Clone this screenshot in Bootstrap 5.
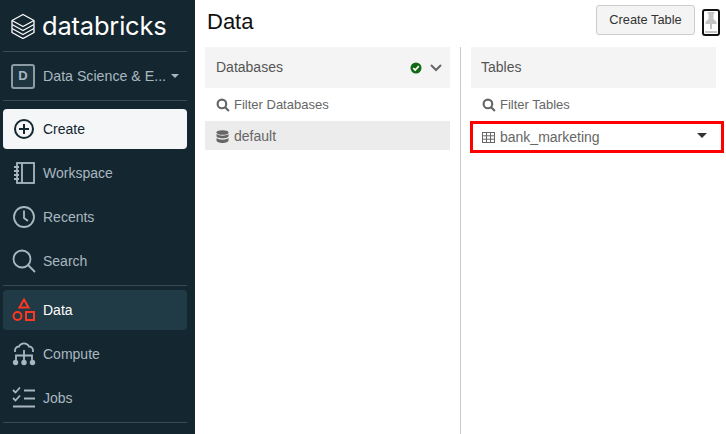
<!doctype html>
<html><head><meta charset="utf-8">
<link href="https://cdn.jsdelivr.net/npm/bootstrap@5.3.0/dist/css/bootstrap.min.css" rel="stylesheet">
<style>
html,body{height:434px;overflow:hidden}
body{font-family:"Liberation Sans",Arial,sans-serif;font-size:14px;color:#333;background:#fff}
.app-shell{height:434px}
.side{width:195px;background:#14262f;color:#a9b8c0;padding:0 8px 0 3px;flex:none}
.brand{height:51px;color:#fff;padding-left:8px;gap:7px}
.brand-name{font-family:Inter,sans-serif;font-size:25.5px;line-height:1;letter-spacing:-.2px;font-weight:400}
.rule{height:1px;background:#3a4a52;flex:none}
.rule-gap{margin-top:2px}
.ws{height:48px;padding-left:8px;gap:8px}
.ws-name{font-size:14.2px;padding-top:2px}
.ws-badge{width:24px;height:25px;border:2px solid #8b9ca5;border-radius:3px;font-weight:700;font-size:13px;color:#a9b8c0;background:#1f3640}
.caret-s{width:0;height:0;border-left:4px solid transparent;border-right:4px solid transparent;border-top:4px solid #a9b8c0;margin-left:-3px}
.nav-row{height:44px;padding-left:9px;gap:7px;color:#a9b8c0;white-space:nowrap}
.nav-row svg{flex:none}
.create-row{height:40px;background:#f4f6f7;color:#14262f;border-radius:4px;margin:8px 0 2px}
.active-row{height:40px;background:#203a46;color:#fff;border-radius:4px;margin:4px 0 2px}
.ico{width:24px;height:24px}
.main-area{min-width:0}
.page-head{height:47px;padding-left:12px;padding-right:6px}
.page-title{font-size:22px;font-weight:400;color:#111;margin:-4px 0 0;line-height:1}
.btn-create{height:30px;width:99px;padding:0;background:#f4f4f4;border:1px solid #ccc;border-radius:3px;font-size:12.8px;color:#333;margin-right:7px;margin-top:-7px}
.pin-btn{width:18px;height:27px;border:2px solid #111;border-radius:3px;padding:0;background:#fff;margin-top:-3px}
.pane{width:245px;flex:none}
.pane-l{margin-left:10px}
.pane-sep{width:1px;background:#ccc;margin:0 10px;flex:none}
.pane-head{height:41px;background:#f4f4f4;padding:0 8px 0 11px;color:#555;font-size:14px}
.pane-head-t{padding-left:10px}
.filter{height:33px;padding-left:11px;gap:4px;color:#666;font-size:13px}
.item{height:29px;background:#ececec;padding:2px 0 0 11px;gap:5px;color:#666;font-size:14px}
.item-t{height:32px;width:254px;margin-left:-1px;border:3px solid #f00;padding:0 14px 0 9px;gap:5px;color:#666;font-size:14px;background:#fff}
.caret-d{width:0;height:0;border-left:5px solid transparent;border-right:5px solid transparent;border-top:5px solid #333;margin-top:-4px}
</style></head>
<body>
<div class="app-shell d-flex">
<aside class="side d-flex flex-column">
  <div class="brand d-flex align-items-center">
    <svg width="24" height="26" viewBox="0 0 24 26" fill="none" stroke="#fff" stroke-width="1.300" stroke-linejoin="round"><path d="M12 1.500 23 7.500 12 13.500 1 7.500Z"/><path d="M1 8v3.500l11 6 11-6V8"/><path d="M1 12v3.500l11 6 11-6V12"/><path d="M1 16v3.500l11 6 11-6V16"/></svg>
    <span class="brand-name">databricks</span>
  </div>
  <div class="rule"></div>
  <div class="ws d-flex align-items-center">
    <span class="ws-badge d-flex align-items-center justify-content-center">D</span>
    <span class="ws-name">Data Science &amp; E...</span><span class="caret-s"></span>
  </div>
  <div class="rule"></div>
  <div class="nav-row create-row d-flex align-items-center">
    <svg class="ico" viewBox="0 0 24 24" fill="none" stroke="#14262f" stroke-width="2"><circle cx="12" cy="12" r="9"/><path d="M12 7v10M7 12h10"/></svg><span>Create</span>
  </div>
  <div class="nav-row d-flex align-items-center">
    <svg class="ico" viewBox="0 0 24 24" fill="none" stroke="#a9b8c0" stroke-width="1.800"><rect x="5" y="2" width="17" height="20"/><path d="M10 2v20M2 6h5M2 10h5M2 14h5M2 18h5"/></svg><span>Workspace</span>
  </div>
  <div class="nav-row d-flex align-items-center">
    <svg class="ico" viewBox="0 0 24 24" fill="none" stroke="#a9b8c0" stroke-width="1.800"><circle cx="12" cy="12" r="10"/><path d="M12 5.500V13l4 3"/></svg><span>Recents</span>
  </div>
  <div class="nav-row d-flex align-items-center">
    <svg class="ico" viewBox="0 0 24 24" fill="none" stroke="#a9b8c0" stroke-width="1.800"><circle cx="10" cy="10" r="8.500"/><path d="M16 16l7 7"/></svg><span>Search</span>
  </div>
  <div class="rule rule-gap"></div>
  <div class="nav-row active-row d-flex align-items-center">
    <svg class="ico" viewBox="0 0 24 24" fill="none" stroke="#ff3621" stroke-width="2"><path d="M12 1.500 16.500 9.500h-9Z"/><circle cx="5.500" cy="18" r="4"/><rect x="14" y="14" width="8" height="8"/></svg><span>Data</span>
  </div>
  <div class="nav-row d-flex align-items-center">
    <svg class="ico" viewBox="0 0 24 24" fill="none" stroke="#a9b8c0" stroke-width="1.800"><path d="M3 10V8.500a4 4 0 0 1 4-4 5.500 5.500 0 0 1 10 0 4 4 0 0 1 4 4V10"/><path d="M12 8v12M4 18v-4.500h16V18"/><circle cx="3.500" cy="20.500" r="1.800" fill="#a9b8c0"/><circle cx="12" cy="20.500" r="1.800" fill="#a9b8c0"/><circle cx="20.500" cy="20.500" r="1.800" fill="#a9b8c0"/></svg><span>Compute</span>
  </div>
  <div class="nav-row d-flex align-items-center">
    <svg class="ico" viewBox="0 0 24 24" fill="none" stroke="#a9b8c0" stroke-width="1.800"><path d="M1 4l2.500 2.500L8 1.500M1 12l2.500 2.500L8 9.500M12 4.500h11M12 12.500h11M1 20.500h22"/></svg><span>Jobs</span>
  </div>
  <div class="rule rule-gap"></div>
</aside>
<main class="main-area flex-grow-1 d-flex flex-column">
  <div class="page-head d-flex align-items-center">
    <h1 class="page-title flex-grow-1">Data</h1>
    <button class="btn-create" type="button">Create Table</button>
    <button class="pin-btn d-flex align-items-center justify-content-center" type="button" aria-label="Pin">
      <svg width="12" height="23" viewBox="0 0 12 23" fill="#c4c4c4"><path d="M2.500 1h7v1.500L8.500 3v5l3 3v2H.5v-2l3-3V3l-1-.5Z"/><rect x="5" y="13" width="2" height="5"/><rect x="0" y="20" width="12" height="2"/></svg>
    </button>
  </div>
  <div class="d-flex flex-grow-1">
    <section class="pane pane-l">
      <div class="pane-head d-flex align-items-center justify-content-between">
        <span>Databases</span>
        <span class="d-flex align-items-center gap-2">
          <svg width="12" height="12" viewBox="0 0 12 12"><circle cx="6" cy="6" r="5.500" fill="#0f6b12"/><path d="M3.200 6.200 5.200 8 8.800 4.200" fill="none" stroke="#fff" stroke-width="1.700"/></svg>
          <svg width="12" height="8" viewBox="0 0 12 8" fill="none" stroke="#666" stroke-width="2"><path d="M1 1l5 5 5-5"/></svg>
        </span>
      </div>
      <div class="filter d-flex align-items-center">
        <svg width="14" height="14" viewBox="0 0 13 13" fill="none" stroke="#666" stroke-width="2"><circle cx="5.500" cy="5.500" r="4"/><path d="M8.500 8.500 12 12"/></svg><span>Filter Databases</span>
      </div>
      <div class="item d-flex align-items-center">
        <svg width="13" height="14" viewBox="0 0 13 14" fill="#666"><ellipse cx="6.500" cy="2.500" rx="6" ry="2.300"/><path d="M.5 4v2c0 1.300 2.700 2.300 6 2.300s6-1 6-2.300V4c-1.500 1.300-3.800 1.700-6 1.700S2 5.300.5 4Z"/><path d="M.5 8v2.500c0 1.300 2.700 2.500 6 2.500s6-1.200 6-2.500V8c-1.500 1.300-3.800 1.700-6 1.700S2 9.300.5 8Z"/></svg><span>default</span>
      </div>
    </section>
    <div class="pane-sep"></div>
    <section class="pane">
      <div class="pane-head pane-head-t d-flex align-items-center"><span>Tables</span></div>
      <div class="filter d-flex align-items-center">
        <svg width="14" height="14" viewBox="0 0 13 13" fill="none" stroke="#666" stroke-width="2"><circle cx="5.500" cy="5.500" r="4"/><path d="M8.500 8.500 12 12"/></svg><span>Filter Tables</span>
      </div>
      <div class="item-t d-flex align-items-center">
        <svg width="13" height="11" viewBox="0 0 13 11" fill="none" stroke="#666"><rect x=".5" y=".5" width="12" height="10"/><path d="M.5 3.800h12M.5 7.200h12M4.500 .5v10M8.500 .5v10"/></svg>
        <span class="flex-grow-1">bank_marketing</span><span class="caret-d"></span>
      </div>
    </section>
  </div>
</main>
</div>
<script src="https://cdn.jsdelivr.net/npm/bootstrap@5.3.0/dist/js/bootstrap.bundle.min.js"></script>
</body></html>
